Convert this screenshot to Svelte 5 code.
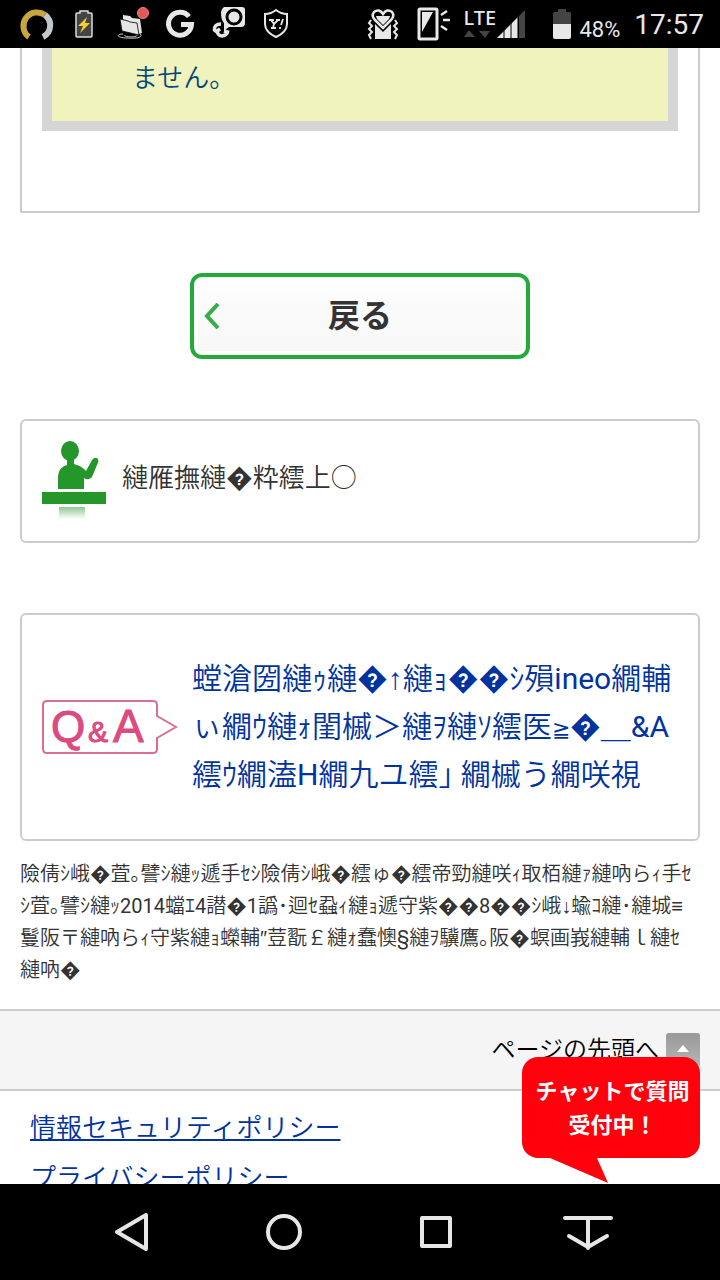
<script lang="ts">
	const links = ['情報セキュリティポリシー', 'プライバシーポリシー'];
</script>

<div class="screen">
	<header class="status">
		<div class="icons">
			<svg viewBox="0 0 48 48" aria-hidden="true">
				<path d="M17 37A13 13 0 0 1 33 15" fill="none" stroke="#c9a63c" stroke-width="6" />
				<path d="M33 15A13 13 0 0 1 31 37" fill="none" stroke="#c4c8ca" stroke-width="6" />
			</svg>
			<svg viewBox="0 0 48 48" aria-hidden="true">
				<path
					d="M20 13V11H28V13H31Q32 13 32 14V36Q32 37 31 37H17Q16 37 16 36V14Q16 13 17 13Z"
					fill="#444"
					stroke="#ddd"
					stroke-width="1.5"
				/>
				<path d="M27 17L18 26H23L20 33L30 23H25Z" fill="#f5d02c" />
			</svg>
			<svg viewBox="0 0 48 48" aria-hidden="true">
				<path d="M15 19V15L22 16 24 18 32 19 34 33 31 34Z" fill="#e6e6e6" />
				<path d="M12 19L20 21 22 22 29 23 31 35 14 31Z" fill="#e6e6e6" stroke="#000" stroke-width="0.8" />
				<path
					d="M15 34C8 34 8 38 20 38C32 39 35 36 32 34M17 35C14 37 30 38 29 35"
					fill="none"
					stroke="#ccc"
				/>
				<circle cx="35" cy="13" r="5.5" fill="#e3585c" stroke="#f08080" />
			</svg>
			<svg viewBox="0 0 48 48" aria-hidden="true">
				<path d="M33 16.5A11.5 11.5 0 1 0 35.5 24.5H25" fill="none" stroke="#e8e8e8" stroke-width="5" />
			</svg>
			<svg viewBox="0 0 48 48" aria-hidden="true">
				<path d="M20 7H38Q41 7 41 10V23Q41 27 37 27H25L20 31V23Q17 20 17 12Q17 9 20 7Z" fill="#e8e8e8" />
				<circle cx="30" cy="17" r="7" fill="#e8e8e8" stroke="#000" stroke-width="3" />
				<path
					d="M17 24Q10 24 10.500 30L12.500 31.500 16 29M13 31Q14 36 18 36Q23 35 23.500 32L20 31"
					fill="none"
					stroke="#e8e8e8"
					stroke-width="3.5"
				/>
			</svg>
			<svg viewBox="0 0 48 48" aria-hidden="true">
				<path
					d="M24 10Q29 14 35 14V24Q35 32 24 37Q13 32 13 24V14Q19 14 24 10Z"
					fill="none"
					stroke="#e8e8e8"
					stroke-width="2"
				/>
				<path
					d="M17 20H22M19 20L22 24 26 20M24 20H28M22 24L21 28M19 28H24M31 19L29 25M28 27V29"
					fill="none"
					stroke="#e8e8e8"
					stroke-width="1.8"
				/>
			</svg>
		</div>
		<div class="icons">
			<svg viewBox="0 0 48 48" aria-hidden="true">
				<path d="M16 24V39H32V24L24 32Z" fill="#e8e8e8" />
				<path
					d="M24 14Q20 8 15 12Q12 16 16 20L24 28 32 20Q36 16 33 12Q28 8 24 14Z"
					fill="#000"
					stroke="#e8e8e8"
					stroke-width="2.5"
				/>
				<path d="M17 16H31L30 19 24 25 18 19Z" fill="#e8e8e8" />
				<path
					d="M12 20L10 23 13 26 10 29 13 32 10 35 12 39M36 20L38 23 35 26 38 29 35 32 38 35 36 39"
					fill="none"
					stroke="#e8e8e8"
					stroke-width="2"
				/>
			</svg>
			<svg viewBox="0 0 48 48" aria-hidden="true">
				<rect x="12" y="9" width="18" height="30" rx="1" fill="none" stroke="#e8e8e8" stroke-width="3" />
				<path d="M15 12H26L15 32Z" fill="#e8e8e8" />
				<path d="M34 15L40 11M36 20H43M34 26L40 30" stroke="#e8e8e8" stroke-width="2.5" />
			</svg>
			<div class="network">
				<span>LTE</span>
				<svg viewBox="0 0 28 10" aria-hidden="true">
					<path d="M1 8L6 1 12 8ZM16 2H27L22 9Z" fill="#444" />
				</svg>
			</div>
			<svg class="signal" viewBox="0 0 32 48" aria-hidden="true">
				<path d="M2 38L23 17V38Z" fill="#e8e8e8" />
				<path d="M24 16L30 10V38H24Z" fill="#444" />
				<path d="M9 28V38M16 21V38M23 14V38" stroke="#000" />
			</svg>
			<svg viewBox="0 0 48 48" aria-hidden="true">
				<path d="M27 12H31V9H39V12H43Q44 12 44 14V24H26V14Q26 12 27 12Z" fill="#444" />
				<path d="M26 24H44V37Q44 39 42 39H28Q26 39 26 37Z" fill="#e8e8e8" />
			</svg>
			<span class="percent">48%</span>
			<time>17:57</time>
		</div>
	</header>

	<main>
		<section class="panel">
			<div class="note">ません。</div>
		</section>

		<button class="back" type="button">
			<svg viewBox="0 0 16 26" aria-hidden="true">
				<path d="M14 1L3 13 14 25" fill="none" stroke="#35ad48" stroke-width="4" />
			</svg>
			<span>戻る</span>
		</button>

		<section class="card contact">
			<svg viewBox="0 0 64 80" aria-hidden="true">
				<defs>
					<linearGradient id="shade" x2="0" y2="1">
						<stop offset="0" stop-color="#91c795" />
						<stop offset="1" stop-color="#fff" />
					</linearGradient>
				</defs>
				<g fill="#24962a">
					<ellipse cx="28" cy="10" rx="9" ry="10" />
					<path
						d="M25 17H32V23Q40 25 44 30L50 19Q53 15 56 18Q57 20 55 24L50 36Q46 40 42 37V48H16V35Q17 26 25 24Z"
					/>
					<rect y="51" width="64" height="12" />
				</g>
				<rect x="17" y="66" width="26" height="12" fill="url(#shade)" />
			</svg>
			<p>縺雁撫縺�粋繧上○</p>
		</section>

		<section class="card faq">
			<svg viewBox="0 0 136 56" aria-hidden="true">
				<path
					d="M5 2H111Q115 2 115 6V17L134 28 115 39V50Q115 54 111 54H5Q1 54 1 50V6Q1 2 5 2Z"
					fill="#fff"
					stroke="#dc6d96"
					stroke-width="2"
				/>
				<text x="9" y="43" font-size="44">Q</text>
				<text x="46" y="43" font-size="30">&amp;</text>
				<text x="71" y="43" font-size="46">A</text>
			</svg>
			<a href="#faq">
				螳滄圀縺ｩ縺�<span class="narrow">↑</span>縺ｮ��ｼ殞<span class="latin">ineo</span>繝輔<br />
				ぃ繝ｳ縺ｫ閨槭＞縺ｦ縺ｿ繧医<span class="narrow small">≧</span>�＿<span class="latin">&amp;A</span><br />
				繧ｳ繝溘<span class="latin">Η</span>繝九ユ繧｣ 繝槭う繝咲視
			</a>
		</section>

		<p class="tax">
			險倩ｼ峨�萓｡譬ｼ縺ｯ遞手ｾｼ險倩ｼ峨�繧ゅ�繧帝勁縺咲ｨ取栢縺ｧ縺吶らｨ手ｾ<br />
			ｼ萓｡譬ｼ縺ｯ<span class="latin">2014</span>蟷ｴ<span class="latin">4</span>譛�<span class="latin">1</span
			>譌･迴ｾ蝨ｨ縺ｮ遞守紫��<span class="latin">8</span>��ｼ峨<span class="narrow">↓</span>蝓ｺ縺･縺城<span
				class="narrow">≡</span
			><br />
			鬘阪〒縺吶らｨ守紫縺ｮ蠑輔<span class="narrow">″</span>荳翫￡縺ｫ蠢懊<span class="latin">§</span
			>縺ｦ驥鷹｡阪�螟画峩縺輔ｌ縺ｾ<br />
			縺吶�
		</p>

		<div class="to-top">
			<a href="#top">
				ページの先頭へ
				<svg viewBox="0 0 34 34" aria-hidden="true">
					<defs>
						<linearGradient id="tile" x2="0" y2="1">
							<stop offset="0" stop-color="#999" />
							<stop offset="1" stop-color="#b5b5b5" />
						</linearGradient>
					</defs>
					<rect width="34" height="34" rx="3" fill="url(#tile)" />
					<path d="M11 19L17 12 23 19Z" fill="#fff" />
				</svg>
			</a>
		</div>

		<ul>
			{#each links as link, index (link)}
				<li><a class:underlined={index === 0} href="#policy">{link}</a></li>
			{/each}
		</ul>

		<button class="chat" type="button">
			<span>チャットで質問<br />受付中！</span>
			<svg viewBox="0 0 178 26" aria-hidden="true">
				<path d="M28 0L86 25 75 0Z" fill="#ff000c" />
			</svg>
		</button>
	</main>

	<nav>
		<button type="button" aria-label="Back">
			<svg viewBox="0 0 56 56"><path d="M42 11V45L13 28Z" /></svg>
		</button>
		<button type="button" aria-label="Home">
			<svg viewBox="0 0 56 56"><circle cx="28" cy="28" r="16" /></svg>
		</button>
		<button type="button" aria-label="Recent apps">
			<svg viewBox="0 0 56 56"><rect x="14" y="14" width="28" height="28" /></svg>
		</button>
		<button type="button" aria-label="Hide bar">
			<svg viewBox="0 0 56 56"><path d="M5 14H51M28 14V44M9 32L28 43 47 32" /></svg>
		</button>
	</nav>
</div>

<style>
	:global(body) {
		margin: 0;
	}
	.screen {
		display: flex;
		flex-direction: column;
		height: 100vh;
		overflow: hidden;
		background: #fff;
		color: #333;
		font-family: Roboto, 'Noto Sans CJK JP', sans-serif;
		font-weight: 350;
	}
	svg {
		display: block;
		flex: none;
	}
	button {
		font: inherit;
		border: none;
		padding: 0;
		cursor: pointer;
	}
	p,
	ul {
		margin: 0;
		padding: 0;
	}
	a {
		color: #0033a0;
		text-decoration: none;
	}
	.status {
		display: flex;
		flex: none;
		justify-content: space-between;
		height: 48px;
		padding: 0 16px 0 12px;
		background: #000;
		color: #e8e8e8;
		font-weight: 400;
	}
	.icons {
		display: flex;
	}
	.icons > svg {
		width: 48px;
		height: 48px;
	}
	.icons > .signal {
		width: 32px;
	}
	.network {
		width: 32px;
		margin-left: 8px;
		padding-top: 6px;
		font-family: 'Noto Sans', sans-serif;
		font-size: 20px;
		font-weight: 500;
		line-height: 23px;
	}
	.network svg {
		width: 28px;
		height: 10px;
	}
	.percent {
		padding: 0 14px 0 4px;
		font-size: 22px;
		line-height: 60px;
	}
	time {
		font-size: 28px;
		line-height: 50px;
	}
	main {
		position: relative;
		flex: 1;
		min-height: 0;
		overflow: hidden;
	}
	.panel {
		margin: 0 20px 60px;
		padding: 0 20px 80px;
		border: 2px solid #ccc;
		border-top: none;
	}
	.note {
		padding: 10px 80px 22px;
		border: 10px solid #d5d5d5;
		border-top: none;
		background: #f0f3bd;
		color: #004a77;
		font-size: 26px;
		line-height: 41px;
	}
	.back {
		display: flex;
		align-items: center;
		width: 340px;
		height: 86px;
		margin: 0 auto 60px;
		padding: 0 10px;
		border: 4px solid #25a93b;
		border-radius: 12px;
		background: linear-gradient(#fff, #fafafa 40%, #f7f7f7);
		box-shadow: inset 0 0 0 4px #fff;
		color: #333;
		font-size: 32px;
		font-weight: 700;
	}
	.back svg {
		width: 16px;
		height: 26px;
	}
	.back span {
		flex: 1;
		padding: 0 16px 6px 0;
	}
	.card {
		display: flex;
		align-items: center;
		box-sizing: border-box;
		margin: 0 20px;
		padding: 20px;
		border: 2px solid #ccc;
		border-radius: 6px;
	}
	.contact {
		align-items: flex-start;
		gap: 16px;
		margin-bottom: 70px;
		font-size: 26px;
		line-height: 74px;
	}
	.contact svg {
		width: 64px;
		height: 80px;
	}
	.faq {
		gap: 14px;
		padding: 40px 20px;
		font-size: 30px;
		line-height: 48px;
		white-space: nowrap;
	}
	.faq svg {
		width: 136px;
		height: 56px;
	}
	.faq text {
		fill: #dc4a80;
		font-family: 'Liberation Sans', sans-serif;
		stroke: #dc4a80;
	}
	.narrow {
		font-family: 'Liberation Sans', 'Noto Sans', sans-serif;
	}
	.small {
		font-size: 22px;
		line-height: 22px;
	}
	.latin {
		font-weight: 400;
	}
	.tax {
		padding: 17px 0 23px 20px;
		font-size: 20px;
		line-height: 32px;
		white-space: nowrap;
	}
	.to-top {
		padding: 22px 20px;
		border: 2px solid #ccc;
		border-width: 2px 0;
		background: #f5f5f5;
	}
	.to-top a {
		display: flex;
		align-items: center;
		justify-content: flex-end;
		gap: 7px;
		color: #000;
		font-size: 24px;
		line-height: 34px;
	}
	.to-top svg {
		width: 34px;
		height: 34px;
	}
	ul {
		padding: 12px 30px;
		list-style: none;
		font-size: 26px;
		line-height: 50px;
	}
	.underlined {
		text-decoration: underline;
	}
	.chat {
		position: absolute;
		right: 20px;
		bottom: 0;
		width: 178px;
		background: none;
		color: #fff;
		font-size: 22px;
		font-weight: 700;
		line-height: 34px;
	}
	.chat span {
		display: block;
		padding: 18px 0 15px 3px;
		border-radius: 16px;
		background: #ff000c;
	}
	.chat svg {
		width: 178px;
		height: 26px;
	}
	nav {
		display: flex;
		flex: none;
		align-items: center;
		justify-content: center;
		gap: 96px;
		height: 96px;
		background: #000;
	}
	nav button {
		background: none;
	}
	nav svg {
		width: 56px;
		height: 56px;
		fill: none;
		stroke: #e6e6e6;
		stroke-width: 4;
		stroke-linecap: round;
		stroke-linejoin: round;
	}
</style>
